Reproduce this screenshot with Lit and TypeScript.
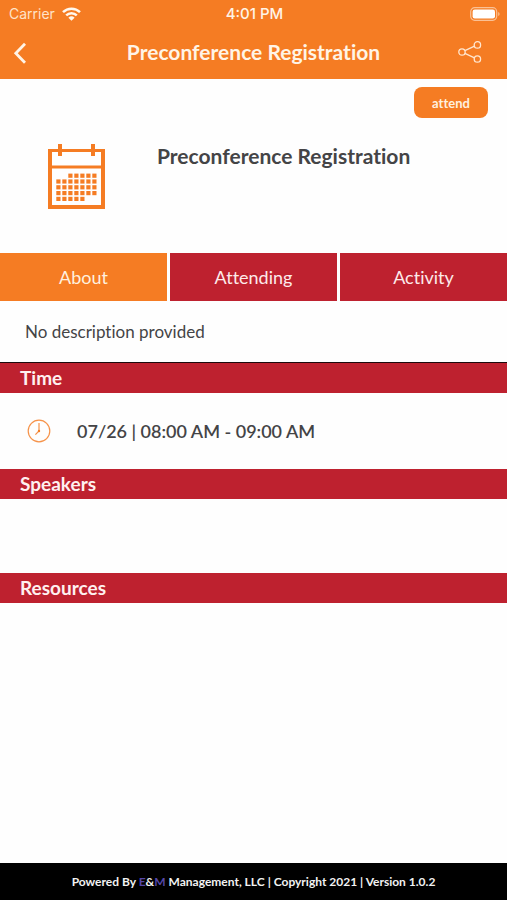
import { LitElement, html, css, svg } from "lit";
import { customElement, state } from "lit/decorators.js";
import { classMap } from "lit/directives/class-map.js";

const TABS = ["About", "Attending", "Activity"];

// Day cells of the calendar icon: [first column, number of cells] per row.
const CALENDAR_ROWS = [
  [2, 5],
  [0, 7],
  [0, 7],
  [0, 7],
  [0, 5],
];

@customElement("app-root")
export class AppRoot extends LitElement {
  @state() private activeTab = "About";

  static styles = css`
    :host {
      --orange: #f57c23;
      --red: #be212f;
      --ink: #444446;
      display: flex;
      flex-direction: column;
      min-height: 100vh;
      background: #fefefe;
      color: var(--ink);
      font-family: Lato, "Liberation Sans", sans-serif;
      font-variant-ligatures: none;
    }
    * {
      box-sizing: border-box;
    }
    svg {
      display: block;
    }
    h1,
    h2,
    h3,
    p {
      margin: 0;
    }
    button {
      margin: 0;
      padding: 0;
      border: 0;
      background: none;
      color: inherit;
      font: inherit;
      font-variant-ligatures: none;
      cursor: pointer;
    }
    .top {
      background: var(--orange);
      color: #fff4e6;
    }
    .status {
      display: grid;
      grid-template-columns: 1fr auto 1fr;
      align-items: center;
      height: 27px;
      padding: 0 7px 0 9px;
      font: 14px/18px Inter, "Liberation Sans", sans-serif;
    }
    .carrier {
      display: flex;
      align-items: center;
      gap: 7px;
      color: #ffe3c8;
    }
    .clock {
      font-size: 15px;
      font-weight: 500;
    }
    .battery {
      justify-self: end;
    }
    .nav {
      display: grid;
      grid-template-columns: 56px 1fr 56px;
      align-items: center;
      height: 52px;
      padding-bottom: 2px;
    }
    .nav h1 {
      font-size: 21px;
      line-height: 26px;
      font-weight: 700;
      text-align: center;
      white-space: nowrap;
    }
    .back {
      justify-self: start;
      padding-left: 12px;
    }
    .share {
      justify-self: end;
      padding-right: 25px;
    }
    .hero {
      display: flex;
      flex-direction: column;
      padding: 8px 19px 44px;
    }
    .attend {
      align-self: flex-end;
      width: 74px;
      height: 31px;
      border-radius: 8px;
      background: var(--orange);
      color: #fff0df;
      font-size: 13px;
      font-weight: 700;
    }
    .session {
      display: flex;
      gap: 52px;
      padding: 26px 0 0 29px;
    }
    .session h2 {
      font-size: 21px;
      line-height: 24px;
      font-weight: 700;
    }
    .tabs {
      display: grid;
      grid-template-columns: repeat(3, 1fr);
      gap: 3px;
    }
    .tab {
      height: 48px;
      background: var(--red);
      color: #fdeaea;
      font-size: 18px;
    }
    .tab.active {
      background: var(--orange);
      color: #fff0df;
    }
    .description {
      padding: 19px 25px 18px;
      border-bottom: 1px solid #1c0a0c;
      font-size: 17px;
      line-height: 24px;
    }
    .bar {
      padding: 3px 20px;
      background: var(--red);
      color: #fff0f0;
      font-size: 19px;
      line-height: 24px;
      font-weight: 700;
    }
    .when {
      display: flex;
      align-items: center;
      gap: 26px;
      height: 76px;
      padding: 0 27px;
      font-size: 18px;
      line-height: 24px;
      font-weight: 600;
    }
    .empty {
      height: 74px;
    }
    .footer {
      margin-top: auto;
      padding: 11px 0 10px;
      background: #000;
      color: #f2f2f2;
      font-size: 12px;
      line-height: 16px;
      font-weight: 700;
      text-align: center;
    }
    .brand {
      color: #5546a8;
    }
  `;

  private calendar() {
    return html`<svg width="57" height="65" viewBox="0 0 57 65" aria-hidden="true" fill="#f57c23">
      <path d="M0 5h57v60H0zM4 8v13.5h49V8zM4 24.5V61h49V24.5z" fill-rule="evenodd" />
      <path d="M10 0h4v12h-4zM43 0h4v12h-4z" />
      ${CALENDAR_ROWS.flatMap(([start, count], row) =>
        Array.from(
          { length: row === 3 ? 7 : count },
          (_, i) =>
            svg`<rect x=${8.3 + (start + i) * 6} y=${29.6 + row * 5.8} width="4.2" height="4.2" />`,
        ),
      )}
    </svg>`;
  }

  render() {
    return html`
      <header class="top">
        <div class="status">
          <div class="carrier">
            <span>Carrier</span>
            <svg width="19" height="14" viewBox="0 0 19 14" fill="none" stroke="#fff8ee" stroke-width="2.5" aria-label="Wi-Fi">
              <path d="M1 5.2a12.2 12.2 0 0 1 17 0M4.2 8.3a7.6 7.6 0 0 1 10.6 0" />
              <path d="M9.5 13.8 6.4 10.7a4.5 4.5 0 0 1 6.2 0z" fill="#fff8ee" stroke="none" />
            </svg>
          </div>
          <span class="clock">4:01 PM</span>
          <svg class="battery" width="30" height="14" viewBox="0 0 30 14" aria-label="Battery full">
            <rect x=".7" y=".7" width="26" height="12.6" rx="4" fill="none" stroke="#fac195" stroke-width="1.2" />
            <rect x="2.6" y="2.6" width="22.4" height="8.8" rx="2.2" fill="#fff" />
            <path d="M28.2 5v4q1.4-.6 1.4-2t-1.4-2z" fill="#fac195" />
          </svg>
        </div>
        <nav class="nav">
          <button class="back" aria-label="Back">
            <svg width="16" height="24" viewBox="0 0 16 24" fill="none" stroke="#fff4e6" stroke-width="2.8">
              <path d="M13 3.8 3.8 13.3 13 22.8" />
            </svg>
          </button>
          <h1>Preconference Registration</h1>
          <button class="share" aria-label="Share">
            <svg width="24" height="24" viewBox="0 0 24 24" fill="none" stroke="#ffe6cf" stroke-width="1.3">
              <circle cx="4" cy="12" r="3.2" />
              <circle cx="19.4" cy="4.9" r="3.2" />
              <circle cx="19.4" cy="19" r="3.2" />
              <path d="M6.9 10.6 16.5 6.2M6.9 13.4l9.6 4.4" />
            </svg>
          </button>
        </nav>
      </header>

      <section class="hero">
        <button class="attend">attend</button>
        <div class="session">
          ${this.calendar()}
          <h2>Preconference Registration</h2>
        </div>
      </section>

      <div class="tabs" role="tablist">
        ${TABS.map(
          (tab) => html`<button
            role="tab"
            aria-selected=${tab === this.activeTab}
            class=${classMap({ tab: true, active: tab === this.activeTab })}
            @click=${() => (this.activeTab = tab)}
          >${tab}</button>`,
        )}
      </div>

      <p class="description">No description provided</p>
      <h3 class="bar">Time</h3>
      <div class="when">
        <svg width="24" height="24" viewBox="0 0 24 24" fill="none" stroke="#f6934a" aria-hidden="true">
          <circle cx="12" cy="12" r="10.8" stroke-width="1.2" />
          <path d="M12 4v8l-3.6 3.6" stroke-width="1.2" />
          <circle cx="12" cy="12" r="1.2" fill="#f57c23" stroke="none" />
        </svg>
        <span>07/26 | 08:00 AM - 09:00 AM</span>
      </div>
      <h3 class="bar">Speakers</h3>
      <div class="empty"></div>
      <h3 class="bar">Resources</h3>

      <footer class="footer">
        Powered By <span class="brand">E</span>&amp;<span class="brand">M</span> Management, LLC | Copyright 2021 | Version 1.0.2
      </footer>
    `;
  }
}
